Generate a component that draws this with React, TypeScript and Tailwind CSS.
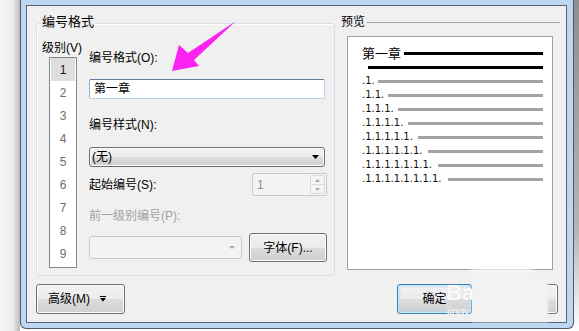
import React from "react";

const face =
  "bg-[linear-gradient(#f2f2f2,#ebebeb_50%,#dddddd_50%,#cfcfcf)] shadow-[inset_0_0_0_1px_#fcfcfc]";

function DownTri({ w = 7, h = 4, color = "#000" }: { w?: number; h?: number; color?: string }) {
  return (
    <svg width={w} height={h} viewBox={`0 0 ${w} ${h}`}>
      <polygon points={`0,0 ${w},0 ${w / 2},${h}`} fill={color} />
    </svg>
  );
}

export default function App() {
  const levels = [1, 2, 3, 4, 5, 6, 7, 8];
  const items = [1, 2, 3, 4, 5, 6, 7, 8, 9];

  return (
    <div className="relative flex w-[579px] h-[331px] overflow-hidden bg-white text-[12px] text-black [font-family:'Liberation_Sans','Noto_Sans_CJK_SC',sans-serif]">
      {/* window behind, left */}
      <div className="w-[20px] shrink-0 bg-[linear-gradient(to_right,#f6f6f6,#ededed_65%,#b8b8b8)]" />

      {/* dialog frame */}
      <div className="w-[554px] shrink-0 h-[329px] flex flex-col bg-[#bed6ef] border-x border-b border-[#4c5b6b] rounded-b-[6px] pt-[5px] pl-[5px] pr-[6px] pb-[5px]">
        <div className="flex-1 flex flex-col border border-[#56667a] bg-[#f0f0f0] pl-[9px] pt-[8px]">
          <div className="flex items-start">
            {/* 编号格式 group */}
            <div className="relative mt-[9px] w-[299px] h-[253px] flex items-start border border-[#d5dfe5] rounded-[3px] shadow-[inset_1px_1px_0_#fff]">
              <span className="absolute left-[4px] top-[-10px] px-[1px] bg-[#f0f0f0] text-[13px] leading-[16px]">
                编号格式
              </span>

              <div className="ml-[5px] mt-[16px] w-[47px] flex flex-col">
                <div className="h-[16px] leading-[16px]">级别(V)</div>
                <div className="ml-[7px] mt-[1px] w-[28px] h-[211px] bg-white border border-[#828790] px-[1px] pb-[2px]">
                  {items.map((n) => (
                    <div
                      key={n}
                      className={`h-[23px] flex items-center justify-center text-[12px] ${
                        n === 1 ? "bg-[#dedede] text-[#1a1a1a]" : "text-[#6d6d6d]"
                      }`}
                    >
                      {n}
                    </div>
                  ))}
                </div>
              </div>

              <div className="mt-[26px] w-[238px] flex flex-col">
                <div className="h-[16px] leading-[16px]">编号格式(O):</div>
                <div className="mt-[13px] w-[236px] h-[20px] bg-white border border-[#b5d1ed] border-t-[#5d7fa3] border-l-[#98b2cc] rounded-[2px] pl-[4px] flex items-center leading-[16px]">
                  第一章
                </div>

                <div className="mt-[18px] h-[16px] leading-[16px]">编号样式(N):</div>
                <div className={`mt-[14px] w-[236px] h-[20px] border border-[#707070] rounded-[3px] ${face} flex items-center pl-[2px] pr-[5px]`}>
                  <span className="flex-1 leading-[16px]">(无)</span>
                  <DownTri />
                </div>

                <div className="mt-[6px] h-[23px] flex items-center justify-between">
                  <span className="leading-[16px]">起始编号(S):</span>
                  <div className="w-[75px] h-[23px] border border-[#c9c9c9] rounded-[2px] bg-[#f4f4f4] flex items-center pl-[4px] pr-[1px]">
                    <span className="flex-1 leading-[16px] text-[#8d8d8d]">1</span>
                    <div className="w-[15px] h-[19px] flex flex-col">
                      <div className="flex-1 border border-[#dadada] rounded-t-[2px] flex items-center justify-center">
                        <svg width="5" height="3" viewBox="0 0 5 3">
                          <polygon points="0,3 5,3 2.5,0" fill="#a8a8a8" />
                        </svg>
                      </div>
                      <div className="flex-1 border border-t-0 border-[#dadada] rounded-b-[2px] flex items-center justify-center">
                        <DownTri w={5} h={3} color="#a8a8a8" />
                      </div>
                    </div>
                  </div>
                </div>

                <div className="mt-[12px] h-[16px] leading-[16px] text-[#a0a0a0]">前一级别编号(P):</div>
                <div className="mt-[9px] h-[29px] flex items-center justify-between">
                  <div className="w-[153px] h-[23px] border border-[#c8c8c8] rounded-[3px] bg-[#f4f4f4] flex items-center justify-end pr-[6px]">
                    <DownTri w={6} h={3} color="#a6a6a6" />
                  </div>
                  <div className={`w-[78px] h-[29px] border border-[#707070] rounded-[3px] ${face} flex items-center justify-center leading-[16px]`}>
                    字体(F)...
                  </div>
                </div>
              </div>
            </div>

            {/* 预览 */}
            <div className="ml-[6px] w-[219px] flex flex-col">
              <div className="h-[16px] flex items-center">
                <span className="leading-[16px]">预览</span>
                <div className="ml-[2px] flex-1 h-px bg-[#a8a8a8]" />
              </div>
              <div className="ml-[6px] mt-[6px] w-[206px] h-[234px] bg-white border border-[#a0a0a0] flex flex-col pt-[9px] pl-[14px] pr-[9px]">
                <div className="flex items-start h-[14px]">
                  <span className="text-[13px] leading-[14px] [font-family:'Noto_Sans_CJK_SC',sans-serif]">第一章</span>
                  <div className="ml-[3px] mt-[6px] flex-1 h-[3px] bg-black" />
                </div>
                <div className="flex items-start h-[14px]">
                  <div className="ml-[6px] mt-[6px] flex-1 h-[3px] bg-black" />
                </div>
                {levels.map((k) => (
                  <div key={k} className="flex items-start h-[14px]">
                    <span
                      className="shrink-0 whitespace-nowrap text-[10px] leading-[14px] text-[#111] [font-family:'DejaVu_Sans',sans-serif]"
                      style={{ width: 6 + 10 * k }}
                    >
                      {"." + "1.".repeat(k)}
                    </span>
                    <div className="mt-[6px] flex-1 h-[3px] bg-[#a3a3a5]" />
                  </div>
                ))}
              </div>
            </div>
          </div>

          {/* bottom buttons */}
          <div className="mt-[8px] flex items-start">
            <div className={`w-[89px] h-[30px] border border-[#707070] rounded-[3px] ${face} flex items-center pl-[11px]`}>
              <span className="leading-[16px]">高级(M)</span>
              <svg className="ml-[10px]" width="6" height="6" viewBox="0 0 6 6">
                <rect x="0" y="0" width="6" height="1" fill="#000" />
                <polygon points="0,2 6,2 3,5.5" fill="#000" />
              </svg>
            </div>
            <div className="ml-auto w-[75px] h-[30px] border border-[#3c7fb1] rounded-[3px] bg-[linear-gradient(#f2f2f2,#ebebeb_50%,#dddddd_50%,#cfcfcf)] shadow-[inset_0_0_0_1px_#c4eafc,inset_0_0_3px_1px_#9fd5f3] flex items-center justify-center leading-[16px]">
              确定
            </div>
            <div className={`ml-[11px] mr-[8px] w-[75px] h-[30px] border border-[#707070] rounded-[3px] ${face} flex items-center justify-center leading-[16px]`}>
              取消
            </div>
          </div>
        </div>
      </div>

      {/* window behind, right */}
      <div className="flex-1 bg-[linear-gradient(#8f8f8f,#b5b5b5_70%,#ffffff)]" />

      {/* watermark */}
      <div className="absolute left-[472px] top-[276px] w-[76px] h-[46px] bg-[#f2f2f2] blur-[1px] pointer-events-none" />
      <div className="absolute left-[470px] top-[262px] w-[64px] h-[10px] rounded-full bg-white/70 blur-[2px] pointer-events-none" />
      <div className="absolute left-[446px] top-[281px] text-[22px] leading-[23px] font-bold text-white/90 [text-shadow:0_0_1px_#c8c8c8] pointer-events-none">
        Ba
      </div>
      <div className="absolute left-[447px] top-[305px] text-[11px] leading-[12px] text-white/90 [text-shadow:0_0_1px_#c8c8c8] pointer-events-none">
        jingy
      </div>

      {/* pointer arrow */}
      <svg className="absolute left-0 top-0 pointer-events-none" width="579" height="331" viewBox="0 0 579 331">
        <polygon points="172,71 179,45 188,53 236,21 194,60 199,66" fill="#fb22f3" />
      </svg>
    </div>
  );
}
